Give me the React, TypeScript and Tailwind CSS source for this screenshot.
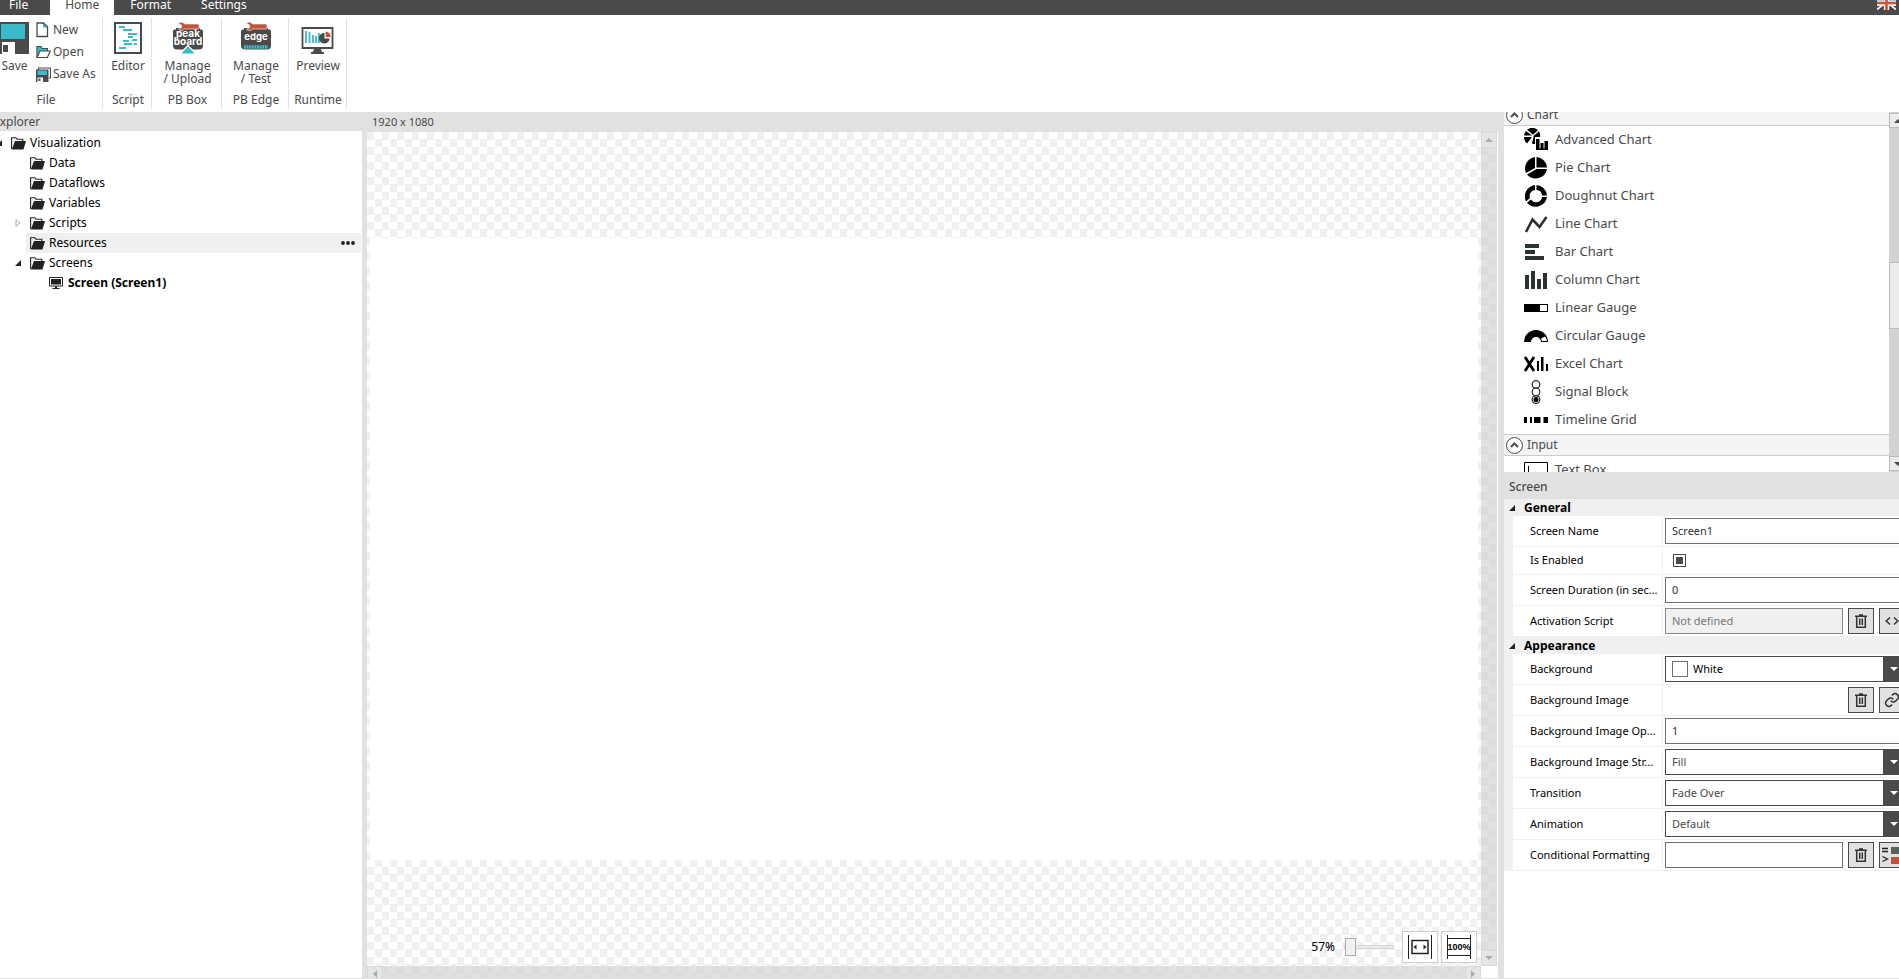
import type { ReactNode } from 'react'

const tabs = ['File', 'Home', 'Format', 'Settings']

/* ---------- icons ---------- */

function SaveIcon() {
  return (
    <svg width="29" height="32" viewBox="0 0 29 32" shapeRendering="crispEdges">
      <path d="M0 0h29v32H0z" fill="#4a4a4a" />
      <path d="M1 2h24v15H1z" fill="#3abbc9" />
      <path d="M0 20h15v12H0z" fill="#fff" />
      <path d="M0 20h2v12H0zM3 23h5v7H3z" fill="#4a4a4a" />
    </svg>
  )
}

function NewIcon() {
  return (
    <svg width="14" height="16" viewBox="0 0 14 16" fill="none" stroke="#4a4a4a" strokeWidth="1.3">
      <path d="M7 1v4.500h4.500z" fill="#3abbc9" stroke="none" />
      <path d="M1 1h6.500L11.500 5v9.500H1z" />
    </svg>
  )
}

function OpenIcon() {
  return (
    <svg width="15" height="14" viewBox="0 0 15 14">
      <path d="M1 2h4.500l1 1.500h5V6H4L1.500 12z" fill="#3abbc9" />
      <path d="M1 12.500V1.500h4l1.200 2h5.300V6M1 12.500L4 6h10.300l-3 6.500z" fill="none" stroke="#4a4a4a" strokeWidth="1.200" />
    </svg>
  )
}

function SaveAsIcon() {
  return (
    <svg width="15" height="15" viewBox="0 0 15 15">
      <path d="M2.500 3V1h12v10H13" fill="none" stroke="#4a4a4a" strokeWidth="1.200" />
      <path d="M0 2.500h12.500V15H0z" fill="#4a4a4a" />
      <path d="M1.500 3.500H11V8H1.500z" fill="#3abbc9" />
      <path d="M1.500 10.500H7V15H1.500z" fill="#fff" />
      <path d="M2.500 11.500h2V14h-2z" fill="#4a4a4a" />
    </svg>
  )
}

function EditorIcon() {
  return (
    <svg width="28" height="32" viewBox="0 0 28 32" shapeRendering="crispEdges">
      <path d="M1 1h26v30H1z" fill="#fff" stroke="#4a4a4a" strokeWidth="2" />
      <g stroke="#3abbc9" strokeWidth="1.500">
        <path d="M5 5h6M9 8h9M14 12h9M14 15h5M18 18h5M9 19h6M10 22h8M20 22h3M5 26h7" />
      </g>
    </svg>
  )
}

function Wrench() {
  return (
    <path
      d="M6.500 1.500C8-.300 11-.300 12.500 2H26a1 1 0 0 1 1 1v3a1 1 0 0 1-1 1H12.500C11 9 8 9 6.500 7.300L9.500 6V3z"
      fill="#c1533b"
      stroke="#fff"
      strokeWidth=".600"
    />
  )
}

function BoxIcon() {
  return (
    <svg width="32" height="33" viewBox="0 0 32 33">
      <path d="M4 6h24v1.500h2l1 1.500v14.500a4 4 0 0 1-4 4H5a4 4 0 0 1-4-4V9l1-1.500h2z" fill="#4a4a4a" />
      <Wrench />
      <g fill="#fff" fontFamily="Inter, sans-serif" fontWeight="700" fontSize="10" textAnchor="middle">
        <text x="16" y="15">peak</text>
        <text x="16" y="22.500">board</text>
      </g>
      <path d="M16 23.500l8 8.500H8z" fill="#3abbc9" stroke="#fff" strokeWidth="1.200" />
    </svg>
  )
}

function EdgeIcon() {
  return (
    <svg width="32" height="33" viewBox="0 0 32 33">
      <path d="M4 6h24v1.500h2l1 1.500v14.500a4 4 0 0 1-4 4H5a4 4 0 0 1-4-4V9l1-1.500h2z" fill="#4a4a4a" />
      <Wrench />
      <text x="16" y="18" fill="#fff" fontFamily="Inter, sans-serif" fontWeight="700" fontSize="9.500" textAnchor="middle">
        edge
      </text>
      <path d="M4 25h24" stroke="#3abbc9" strokeWidth="3.500" strokeDasharray="2 .600" />
    </svg>
  )
}

function PreviewIcon() {
  return (
    <svg width="33" height="33" viewBox="0 0 33 33">
      <path d="M1.500 6h30v20h-30z" fill="#fff" stroke="#4a4a4a" strokeWidth="1.800" />
      <path d="M13 27h7l1 3h2v2H10v-2h2z" fill="#4a4a4a" />
      <path d="M5 9v12M8.500 10v11M12 13v8M15 14v7M18 11v10" stroke="#3abbc9" strokeWidth="1.800" />
      <path d="M23.500 11a5.300 5.300 0 1 0 5 5.500h-5z" fill="#4a4a4a" />
      <path d="M24.700 9.500a5.500 5.500 0 0 1 5 5.500h-5z" fill="#c1533b" />
    </svg>
  )
}

function FlagIcon() {
  return (
    <svg width="19" height="10" viewBox="0 0 19 10">
      <path d="M0 0h19v10H0z" fill="#3d4450" />
      <path d="M0 9.500L8 3M19 9.500L11 3M0 5h19" stroke="#eee" strokeWidth="2" />
      <path d="M0 3h19M9.500 0v10" stroke="#eee" strokeWidth="5.500" />
      <path d="M0 3h19M9.500 0v10" stroke="#c9573f" strokeWidth="2.600" />
    </svg>
  )
}

function FolderIcon() {
  return (
    <svg width="15" height="13" viewBox="0 0 15 13" className="shrink-0">
      <path d="M.600 12V.800h4.200L6 2.300h5.800V4" fill="none" stroke="#222" strokeWidth="1.100" />
      <path d="M4 4h11l-2.500 8.500H.800z" fill="#222" />
    </svg>
  )
}

function MonitorIcon() {
  return (
    <svg width="14" height="12" viewBox="0 0 14 12" className="shrink-0">
      <path d="M.500.500h13v8.500H.500z" fill="#fff" stroke="#222" />
      <path d="M2 2h10v5.500H2zM6 9h2v2H6zM3.500 11h7v1h-7z" fill="#222" />
    </svg>
  )
}

function TrashIcon() {
  return (
    <svg width="12" height="14" viewBox="0 0 12 14" fill="none" stroke="#333" strokeWidth="1.500">
      <path d="M0 2.200h12M4 1h4M1.700 2.500v10.800h8.600V2.500M4.700 4.500v6.500M7.300 4.500v6.500" />
    </svg>
  )
}

function CodeIcon() {
  return (
    <svg width="14" height="10" viewBox="0 0 14 10" fill="none" stroke="#333" strokeWidth="1.500">
      <path d="M5 1.500L1.200 5 5 8.500M9 1.500L12.800 5 9 8.500" />
    </svg>
  )
}

function LinkIcon() {
  return (
    <svg width="16" height="16" viewBox="0 0 24 24" fill="none" stroke="#333" strokeWidth="2.200">
      <path d="M10 13a5 5 0 0 0 7.500.500l3-3a5 5 0 0 0-7-7l-1.700 1.700" />
      <path d="M14 11a5 5 0 0 0-7.500-.500l-3 3a5 5 0 0 0 7 7l1.700-1.700" />
    </svg>
  )
}

function RulesIcon() {
  return (
    <svg width="20" height="18" viewBox="0 0 20 18">
      <path d="M0 2.500h6M0 5.500h6M.500 10.500L5.500 13l-5 2.500" fill="none" stroke="#222" strokeWidth="1.300" />
      <path d="M9 1h10v7H9z" fill="#59615a" />
      <path d="M9 11h10v7H9z" fill="#c1533b" />
    </svg>
  )
}

function Triangle({ dir, color }: { dir: 'up' | 'down' | 'left' | 'right'; color: string }) {
  const d = { up: 'M0 6l4-4 4 4z', down: 'M0 2h8L4 6z', left: 'M6 0v8L2 4z', right: 'M2 0v8l4-4z' }[dir]
  return (
    <svg width="8" height="8" viewBox="0 0 8 8" className="shrink-0">
      <path d={d} fill={color} />
    </svg>
  )
}

function Expanded() {
  return (
    <svg width="6" height="6" viewBox="0 0 6 6" className="shrink-0">
      <path d="M6 0v6H0z" fill="#222" />
    </svg>
  )
}

function Collapsed() {
  return (
    <svg width="6" height="8" viewBox="0 0 6 8" className="shrink-0">
      <path d="M1 .700v6.600L5 4z" fill="#fff" stroke="#aaa" />
    </svg>
  )
}

/* ---------- toolbox ---------- */

const chartTools: { label: string; icon: ReactNode }[] = [
  {
    label: 'Advanced Chart',
    icon: (
      <>
        <path d="M8 9H0a8 8 0 0 0 3 6.500zM8 7.500L2 3A8 8 0 0 0 0 7.500zM9 6.700L3 1.800a8 8 0 0 1 11 .500zM9.500 8l5.500-4.700A8 8 0 0 1 16 9h-5v7a8 8 0 0 1-3-.500L9.500 9z" />
        <path d="M12 11h3.500v11H12zM16.500 15h3v7h-3zM20.500 13H24v9h-3.500zM12 20.500h12V22H12z" />
      </>
    ),
  },
  {
    label: 'Pie Chart',
    icon: (
      <path d="M11 1v11L2 17A11.500 11.500 0 0 1 11 1zM12.500 1A11.500 11.500 0 0 1 23 11.500H12.500zM12.500 13H23A11.500 11.500 0 0 1 3 18.500z" />
    ),
  },
  {
    label: 'Doughnut Chart',
    icon: (
      <path d="M11 1v5A6 6 0 0 0 6 14l-4 3.500A11.500 11.500 0 0 1 11 1zM12.500 1A11.500 11.500 0 0 1 23 11.500h-5A6 6 0 0 0 12.500 6zM18 13h5A11.500 11.500 0 0 1 3 18.700L7 15.500A6 6 0 0 0 18 13z" />
    ),
  },
  {
    label: 'Line Chart',
    icon: <path d="M2 20L8.500 7.500l7 7.500L22.500 5" fill="none" stroke="#2c3333" strokeWidth="2.600" />,
  },
  { label: 'Bar Chart', icon: <path d="M1 4h14v4H1zM1 10h10v4H1zM1 16h19v4H1z" fill="#2c3333" /> },
  {
    label: 'Column Chart',
    icon: <path d="M1 7h4v14H1zM7 3h4v18H7zM13 11h4v10h-4zM19 5h4v16h-4z" fill="#2c3333" />,
  },
  { label: 'Linear Gauge', icon: <path d="M0 8h24v8H0zM16 9v6h7V9z" fillRule="evenodd" /> },
  {
    label: 'Circular Gauge',
    icon: <path d="M0 18a12 12 0 0 1 24 0h-7a5 5 0 0 0-10 0zM18 17h5a10 10 0 0 0-2-4.500l-4 2z" fillRule="evenodd" />,
  },
  {
    label: 'Excel Chart',
    icon: (
      <>
        <path d="M1 5l9 14M10 5L1 19" stroke="#000" strokeWidth="2.800" />
        <path d="M13 9h2v10h-2zM17 5h2.500v14H17zM22 12h2v7h-2z" />
      </>
    ),
  },
  {
    label: 'Signal Block',
    icon: (
      <>
        <g fill="none" stroke="#333" strokeWidth="1.300">
          <circle cx="12" cy="4.500" r="3.800" />
          <circle cx="12" cy="12" r="3.800" />
          <circle cx="12" cy="19.500" r="3.800" />
        </g>
        <circle cx="12" cy="19.500" r="2.500" />
      </>
    ),
  },
  { label: 'Timeline Grid', icon: <path d="M0 9h3v6H0zM6 9h2v6H6zM10 9h6.500v6H10zM19.500 9H24v6h-4.500z" /> },
]

function ToolRow({ label, icon }: { label: string; icon: ReactNode }) {
  return (
    <li>
      <button className="flex h-7 w-full items-center gap-[7px] pl-5 text-[13px] text-[#4a4a4a]">
        <svg width="24" height="24" viewBox="0 0 24 24">
          {icon}
        </svg>
        {label}
      </button>
    </li>
  )
}

function ToolHeader({ label }: { label: string }) {
  return (
    <button className="flex h-[22px] w-full shrink-0 items-center gap-1 border-y border-[#ccc] bg-[#f4f4f4] pl-[2px] text-[12px] text-[#4a4a4a]">
      <svg width="17" height="17" viewBox="0 0 17 17" fill="none" stroke="#4a4a4a">
        <circle cx="8.500" cy="8.500" r="8" fill="#fff" />
        <path d="M5 10l3.500-3.500L12 10" strokeWidth="2" />
      </svg>
      {label}
    </button>
  )
}

/* ---------- ribbon ---------- */

function Group({ title, className, children }: { title: string; className: string; children: ReactNode }) {
  return (
    <section className={`flex h-[91px] shrink-0 flex-col border-r border-[#e1e1e1] ${className}`}>
      <div className="flex flex-1 justify-center pt-1">{children}</div>
      <h2 className="text-center leading-[18px]">{title}</h2>
    </section>
  )
}

function BigButton({ icon, children }: { icon: ReactNode; children: ReactNode }) {
  return (
    <button className="flex shrink-0 flex-col items-center gap-1">
      <span className="flex h-[33px] items-start">{icon}</span>
      <span className="leading-[13px]">{children}</span>
    </button>
  )
}

function SmallButton({ icon, children }: { icon: ReactNode; children: ReactNode }) {
  return (
    <button className="flex h-[22px] items-center gap-[2px] pb-[6px] whitespace-nowrap">
      <span className="w-[15px] shrink-0">{icon}</span>
      {children}
    </button>
  )
}

/* ---------- explorer ---------- */

const nodes = ['Data', 'Dataflows', 'Variables', 'Scripts', 'Resources', 'Screens']

function Explorer() {
  return (
    <aside className="flex w-[362px] shrink-0 flex-col bg-white">
      <h2 className="-ml-[7px] h-[19px] bg-[#e1e1e1] text-[12px] leading-[19px] text-[#4a4a4a]">Explorer</h2>
      <ul className="pt-[2px] text-[12px] text-black">
        <li className="flex h-5 items-center">
          <span className="flex w-[11px]">
            <svg width="2" height="6" viewBox="4 0 2 6">
              <path d="M6 0v6H0z" fill="#222" />
            </svg>
          </span>
          <FolderIcon />
          <span className="pl-1">Visualization</span>
        </li>
        {nodes.map((n) => (
          <li key={n} className="flex h-5 items-center pr-px">
            <span className="flex w-[26px] justify-end pr-[5px]">
              {n === 'Scripts' && <Collapsed />}
              {n === 'Screens' && <Expanded />}
            </span>
            <div className={`flex h-5 flex-1 items-center gap-1 pl-1 ${n === 'Resources' ? 'bg-[#efefef]' : ''}`}>
              <FolderIcon />
              {n}
              {n === 'Resources' && (
                <button aria-label="More" className="ml-auto pr-[6px]">
                  <svg width="14" height="4" viewBox="0 0 14 4" fill="#222">
                    <circle cx="2" cy="2" r="1.900" />
                    <circle cx="7" cy="2" r="1.900" />
                    <circle cx="12" cy="2" r="1.900" />
                  </svg>
                </button>
              )}
            </div>
          </li>
        ))}
        <li className="flex h-5 items-center gap-[5px] pl-[49px] font-bold">
          <MonitorIcon />
          Screen (Screen1)
        </li>
      </ul>
    </aside>
  )
}

/* ---------- canvas ---------- */

function ScrollButton({ dir }: { dir: 'up' | 'down' | 'left' | 'right' }) {
  return (
    <button aria-label={`Scroll ${dir}`} className="flex size-4 shrink-0 items-center justify-center border border-[#d5d9d7] bg-[#e4e6e5]">
      <Triangle dir={dir} color="#a9adab" />
    </button>
  )
}

function Canvas() {
  return (
    <main className="flex min-w-0 flex-1 flex-col">
      <h2 className="h-5 shrink-0 bg-[#e1e1e1] pl-[5px] text-[11px] leading-[19px] text-[#4a4a4a]">1920 x 1080</h2>
      <div className="flex min-h-0 flex-1">
        <div className="flex min-w-0 flex-1 flex-col">
          <div className="relative flex flex-1 bg-[repeating-conic-gradient(#fff_0_25%,#f0f0f0_0_50%)] bg-size-[15px_15px] py-[106px] pr-[3px] pl-[3px]">
            <div className="flex-1 bg-white" />
            <div className="absolute right-1 bottom-[3px] flex items-center gap-[3px]">
              <label htmlFor="zoom" className="pr-[6px] text-[12px] text-black">57%</label>
              <input
                id="zoom"
                type="range"
                min="50"
                max="400"
                defaultValue="50"
                className="mr-[5px] h-[18px] w-[50px] appearance-none bg-transparent [&::-webkit-slider-runnable-track]:h-1 [&::-webkit-slider-runnable-track]:border [&::-webkit-slider-runnable-track]:border-[#d6d6d6] [&::-webkit-slider-runnable-track]:bg-[#e7eaea] [&::-webkit-slider-thumb]:-mt-2 [&::-webkit-slider-thumb]:h-[18px] [&::-webkit-slider-thumb]:w-[11px] [&::-webkit-slider-thumb]:appearance-none [&::-webkit-slider-thumb]:border [&::-webkit-slider-thumb]:border-[#acacac] [&::-webkit-slider-thumb]:bg-[#f0f0f0]"
              />
              <button aria-label="Fit to window" className="flex h-8 w-9 items-center justify-center border border-[#ccc] bg-white">
                <svg width="26" height="26" viewBox="0 0 26 26" fill="none" stroke="#222">
                  <path d="M1.500 1v24M24.500 1v24" />
                  <path d="M5 6.500h16v13H5z" strokeWidth="1.500" />
                  <path d="M9.500 10.500v5L6.500 13zM16.500 10.500v5l3-2.500z" fill="#222" stroke="none" />
                </svg>
              </button>
              <button aria-label="Zoom to 100%" className="flex h-8 w-9 items-center justify-center border border-[#ccc] bg-white">
                <svg width="26" height="26" viewBox="0 0 26 26">
                  <path d="M1.500 1v24M24.500 1v24M1 4.500h24M1 21.500h24" stroke="#222" />
                  <text x="13" y="16" textAnchor="middle" fontSize="9" fontWeight="700" fontFamily="Liberation Sans, sans-serif">
                    100%
                  </text>
                </svg>
              </button>
            </div>
          </div>
          <div className="flex h-3 shrink-0 justify-between overflow-hidden bg-[repeating-conic-gradient(#e1e1e1_0_25%,#dcdcdc_0_50%)] bg-size-[15px_15px]">
            <ScrollButton dir="left" />
            <ScrollButton dir="right" />
          </div>
        </div>
        <div className="flex w-[17px] shrink-0 flex-col bg-white pr-px pb-3">
          <div className="flex flex-1 flex-col justify-between bg-[repeating-conic-gradient(#e1e1e1_0_25%,#dcdcdc_0_50%)] bg-size-[15px_15px]">
            <ScrollButton dir="up" />
            <ScrollButton dir="down" />
          </div>
        </div>
      </div>
    </main>
  )
}

/* ---------- properties ---------- */

function Section({ title, children }: { title: string; children: ReactNode }) {
  return (
    <section>
      <h3 className="flex h-[17px] items-center gap-[9px] pl-[5px] text-[12px] font-bold text-black">
        <Expanded />
        {title}
      </h3>
      <div className="ml-[9px] bg-white">{children}</div>
    </section>
  )
}

function Row({ label, id, short, children }: { label: string; id: string; short?: boolean; children?: ReactNode }) {
  return (
    <div className={`flex border-b border-[#efefef] ${short ? 'h-7' : 'h-[31px]'}`}>
      <label htmlFor={id} className="flex w-[150px] shrink-0 items-center border-r border-[#efefef] pl-[17px] whitespace-nowrap text-black">
        {label}
      </label>
      <div className="flex flex-1 items-center gap-[5px] pr-px pl-[2px]">{children}</div>
    </div>
  )
}

function IconButton({ label, id, children }: { label: string; id?: string; children: ReactNode }) {
  return (
    <button id={id} aria-label={label} className="flex size-[26px] shrink-0 items-center justify-center border border-[#4a4a4a] bg-[#e1e1e1]">
      {children}
    </button>
  )
}

function TextInput({ id, value }: { id: string; value: string }) {
  return <input id={id} type="text" defaultValue={value} className="h-[26px] min-w-0 flex-1 border border-[#707070] bg-white px-[6px] pb-px text-[#333]" />
}

function Select({ id, value, swatch }: { id: string; value: string; swatch?: boolean }) {
  return (
    <div className="flex h-[26px] flex-1 items-center border border-[#4a4a4a] bg-white pl-[6px]">
      {swatch && <span className="mr-[5px] size-4 border border-[#707070] bg-white" />}
      <select id={id} className={`h-6 flex-1 appearance-none ${swatch ? 'text-black' : 'text-[#4a4a4a]'}`}>
        <option>{value}</option>
      </select>
      <span className="flex h-6 w-[21px] items-center justify-center bg-[#4a4a4a]">
        <Triangle dir="down" color="#fff" />
      </span>
    </div>
  )
}

function Properties() {
  return (
    <div className="flex-1 bg-white">
      <h2 className="h-[27px] bg-[#e1e1e1] pt-[5px] pl-[5px] text-[12px] leading-5 font-medium text-[#4a4a4a]">Screen</h2>
      <div className="bg-[#f0f0f0] text-[11px]">
        <Section title="General">
          <Row label="Screen Name" id="name">
            <TextInput id="name" value="Screen1" />
          </Row>
          <Row label="Is Enabled" id="enabled" short>
            <input
              id="enabled"
              type="checkbox"
              defaultChecked
              className="ml-2 size-[13px] appearance-none border border-[#4a4a4a] bg-clip-content p-[2px] checked:bg-[#4a4a4a]"
            />
          </Row>
          <Row label="Screen Duration (in sec..." id="duration">
            <TextInput id="duration" value="0" />
          </Row>
          <Row label="Activation Script" id="script">
            <input
              id="script"
              type="text"
              disabled
              value="Not defined"
              className="h-[26px] min-w-0 flex-1 border border-[#8a8a8a] bg-[#f0f0f0] px-[6px] pb-px text-[#777]"
            />
            <IconButton label="Clear script"><TrashIcon /></IconButton>
            <IconButton label="Edit script"><CodeIcon /></IconButton>
          </Row>
        </Section>
        <Section title="Appearance">
          <Row label="Background" id="background">
            <Select id="background" value="White" swatch />
          </Row>
          <Row label="Background Image" id="image">
            <span className="flex-1" />
            <IconButton label="Clear image"><TrashIcon /></IconButton>
            <IconButton label="Link image" id="image"><LinkIcon /></IconButton>
          </Row>
          <Row label="Background Image Op..." id="opacity">
            <TextInput id="opacity" value="1" />
          </Row>
          <Row label="Background Image Str..." id="stretch">
            <Select id="stretch" value="Fill" />
          </Row>
          <Row label="Transition" id="transition">
            <Select id="transition" value="Fade Over" />
          </Row>
          <Row label="Animation" id="animation">
            <Select id="animation" value="Default" />
          </Row>
          <Row label="Conditional Formatting" id="formatting">
            <TextInput id="formatting" value="" />
            <IconButton label="Clear formatting"><TrashIcon /></IconButton>
            <IconButton label="Edit formatting"><RulesIcon /></IconButton>
          </Row>
        </Section>
      </div>
    </div>
  )
}

function Toolbox() {
  return (
    <div className="flex h-[360px] shrink-0 overflow-hidden bg-white">
      <div className="flex-1">
        <div className="flex h-[14px] items-end overflow-hidden">
          <ToolHeader label="Chart" />
        </div>
        <ul>
          {chartTools.map((t) => (
            <ToolRow key={t.label} {...t} />
          ))}
        </ul>
        <ToolHeader label="Input" />
        <ul>
          <ToolRow label="Text Box" icon={<path d="M.500 4.500h23v15H.500zM4.500 8v9" fill="none" stroke="#000" />} />
        </ul>
      </div>
      <div className="flex w-[17px] flex-col bg-[#d2d2d2] py-px">
        <button aria-label="Scroll up" className="flex h-[15px] items-center justify-center border border-[#bbb] bg-[#ebebeb]">
          <Triangle dir="up" color="#4a4a4a" />
        </button>
        <div className="mt-[134px] h-[67px] border border-[#bbb] bg-[#ebebeb]" />
        <button aria-label="Scroll down" className="mt-auto flex h-[15px] items-center justify-center border border-[#bbb] bg-[#ebebeb]">
          <Triangle dir="down" color="#4a4a4a" />
        </button>
      </div>
    </div>
  )
}

export default function App() {
  return (
    <div className="flex h-screen flex-col overflow-hidden border-b border-[#e1e1e1] bg-white font-['Noto_Sans',sans-serif]">
      <header className="flex h-[15px] shrink-0 items-end overflow-hidden bg-[#4a4a4a] pr-[3px] text-[12px]">
        <nav className="flex">
          {tabs.map((t) => (
            <button
              key={t}
              className={
                t === 'Home'
                  ? 'mr-4 ml-[22px] h-5 bg-white px-[15px] leading-5 text-[#4a4a4a]'
                  : t === 'Settings'
                    ? 'ml-[30px] h-5 leading-5 text-white'
                    : t === 'File'
                      ? 'ml-[9px] h-5 leading-5 text-white'
                      : 'h-5 leading-5 text-white'
              }
            >
              {t}
            </button>
          ))}
        </nav>
        <button aria-label="Language" className="ml-auto self-start">
          <FlagIcon />
        </button>
      </header>

      <div className="flex h-[97px] shrink-0 items-center text-[12px] text-[#4a4a4a]">
        <Group title="File" className="w-[103px] [&>h2]:pr-[10px]">
          <div className="flex flex-1">
            <BigButton icon={<SaveIcon />}>Save</BigButton>
            <div className="ml-[7px] flex flex-col">
              <SmallButton icon={<NewIcon />}>New</SmallButton>
              <SmallButton icon={<OpenIcon />}>Open</SmallButton>
              <SmallButton icon={<SaveAsIcon />}>Save As</SmallButton>
            </div>
          </div>
        </Group>
        <Group title="Script" className="w-[49px] pl-[2px]">
          <BigButton icon={<EditorIcon />}>Editor</BigButton>
        </Group>
        <Group title="PB Box" className="w-[70px] pl-[2px]">
          <BigButton icon={<BoxIcon />}>Manage<br />/ Upload</BigButton>
        </Group>
        <Group title="PB Edge" className="w-[67px] pl-[2px]">
          <BigButton icon={<EdgeIcon />}>Manage<br />/ Test</BigButton>
        </Group>
        <Group title="Runtime" className="w-[58px] pl-px">
          <BigButton icon={<PreviewIcon />}>Preview</BigButton>
        </Group>
      </div>

      <div className="flex min-h-0 flex-1">
        <Explorer />
        <div className="w-[5px] shrink-0 bg-[#e1e1e1]" />
        <Canvas />
        <div className="w-[6px] shrink-0 bg-[#e1e1e1]" />
        <aside className="w-[395px] shrink-0 overflow-hidden">
          <div className="flex h-full w-[402px] flex-col">
            <Toolbox />
            <Properties />
          </div>
        </aside>
      </div>
    </div>
  )
}
